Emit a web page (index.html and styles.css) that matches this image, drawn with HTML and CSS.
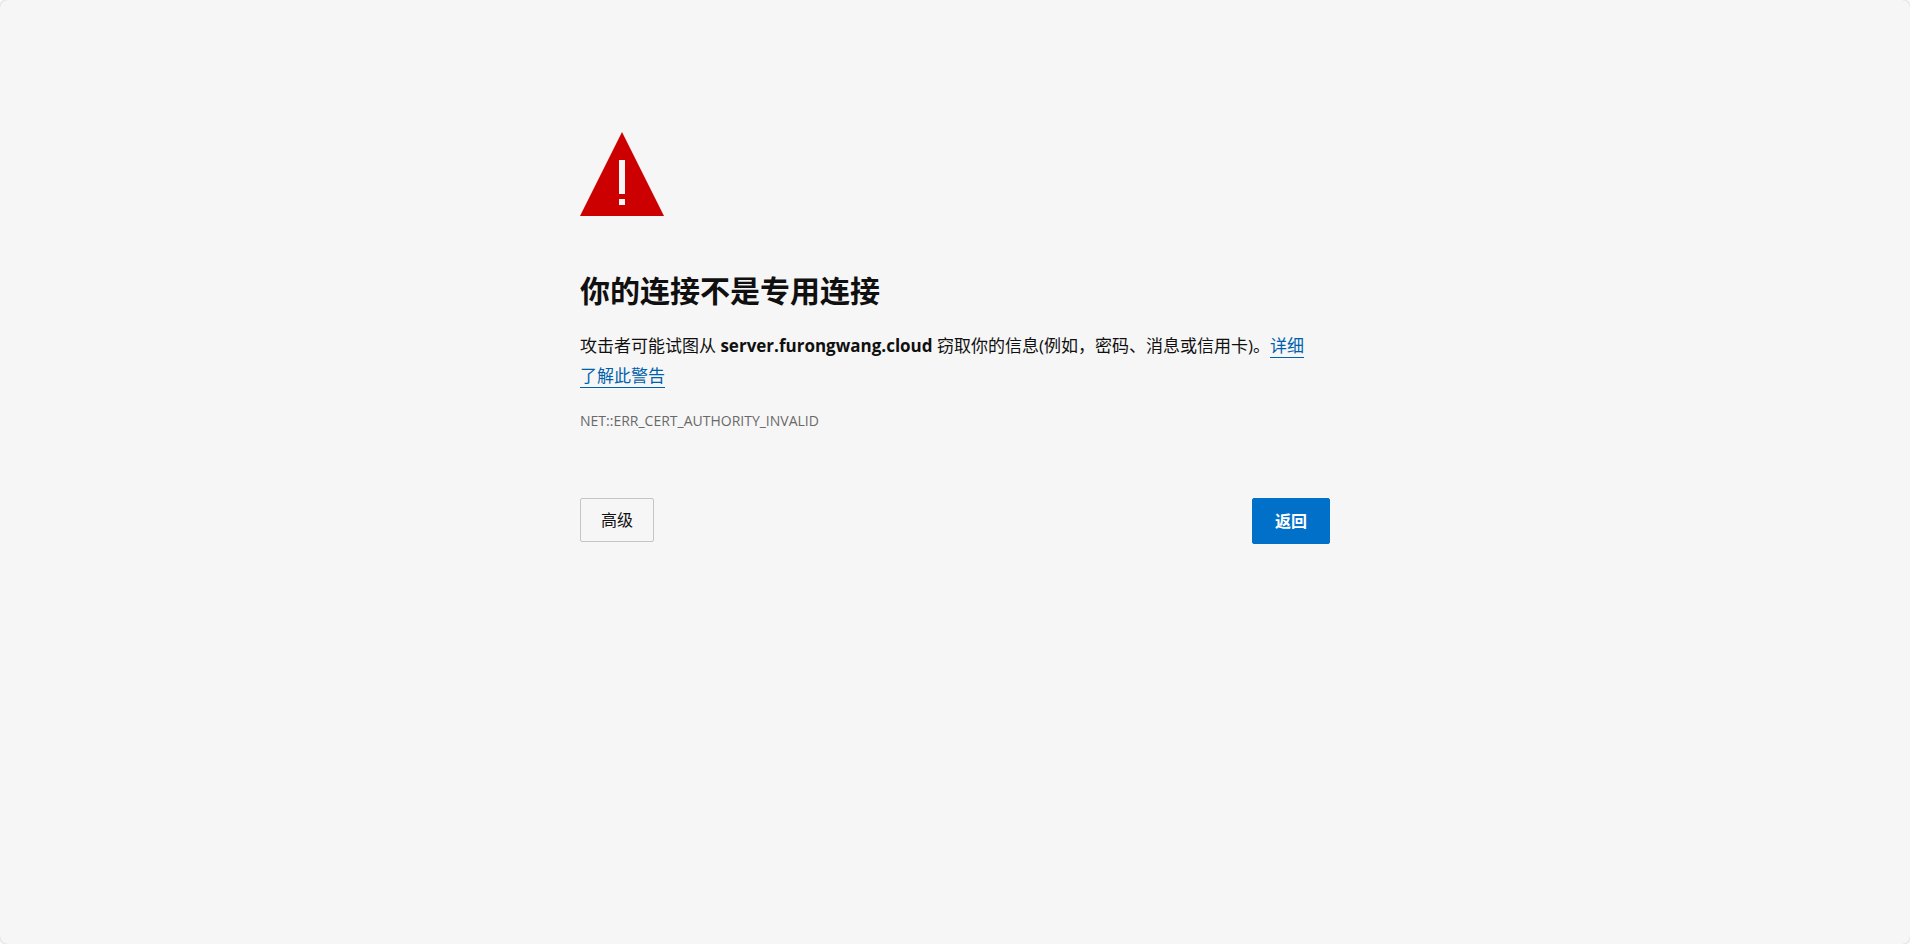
FILE: index.html
```html
<!DOCTYPE html>
<html lang="zh-CN">
<head>
<meta charset="utf-8">
<meta name="viewport" content="width=device-width, initial-scale=1">
<title>隐私错误</title>
<link rel="stylesheet" href="styles.css">
</head>
<body>
<div class="page">
  <main class="interstitial">
    <svg class="icon" viewBox="0 0 84 84" aria-hidden="true">
      <path fill="#cc0000" d="M42 0 84 84H0Z"/>
      <path fill="#f6f6f6" d="M39 28h6v34h-6ZM39 67h6v6h-6Z"/>
    </svg>
    <h1 class="title">你的连接不是专用连接</h1>
    <p class="message">攻击者可能试图从 <strong class="host">server.furongwang.cloud</strong> 窃取你的信息(例如，密码、消息或信用卡)。<a class="learn-more" href="#">详细了解此警告</a></p>
    <p class="error-code">NET::ERR_CERT_AUTHORITY_INVALID</p>
    <div class="actions">
      <button class="button" type="button">高级</button>
      <button class="button button-primary" type="button">返回</button>
    </div>
  </main>
</div>
</body>
</html>
```
FILE: styles.css
```css
* {
  box-sizing: border-box;
}

body {
  margin: 0;
  background: #ffffff;
  color: #101010;
  font-family: "Open Sans", "Noto Sans CJK SC", sans-serif;
}

.page {
  min-height: 100vh;
  padding: 132px 24px 48px;
  background: #f6f6f6;
  border-radius: 8px;
  box-shadow: 0 0 3px rgba(0, 0, 0, 0.3);
}

.interstitial {
  max-width: 750px;
  margin: 0 auto;
}

.icon {
  display: block;
  width: 84px;
  height: 84px;
}

.title {
  margin: 55px 0 20px;
  font-size: 30px;
  line-height: 40px;
  font-weight: 700;
}

.message {
  margin: 0;
  padding-right: 12px;
  font-size: 17px;
  line-height: 30px;
}

.host {
  font-weight: 700;
}

.learn-more {
  color: #0061ab;
  text-decoration: none;
  border-bottom: 1px solid;
}

.error-code {
  margin: 18px 0 0;
  color: #696969;
  font-size: 14px;
  line-height: 24px;
}

.actions {
  display: flex;
  justify-content: space-between;
  align-items: flex-start;
  margin-top: 65px;
}

.button {
  padding: 9px 20px;
  border: 1px solid #c5c5c5;
  border-radius: 2px;
  background: transparent;
  color: #101010;
  font-family: inherit;
  font-size: 16px;
  line-height: 24px;
  cursor: pointer;
}

.button-primary {
  padding: 10px 22px;
  border-color: #0070c9;
  background: #0070c9;
  color: #ffffff;
  font-weight: 700;
}
```
